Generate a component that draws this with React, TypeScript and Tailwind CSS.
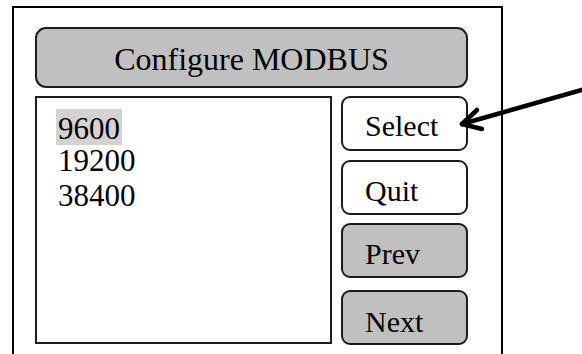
import React from "react";

const rates = ["9600", "19200", "38400"];

function SideButton({ label, filled, className }: { label: string; filled?: boolean; className?: string }) {
  return (
    <div
      className={`h-[55px] flex items-center pl-[22px] rounded-[9px] border-2 border-[#1c1c1c] text-[30px] text-black ${
        filled ? "bg-[#c0c0c0]" : "bg-white"
      } ${className || ""}`}
    >
      {label}
    </div>
  );
}

export default function App() {
  return (
    <div className="relative w-[582px] h-[354px] overflow-hidden bg-white font-['Liberation_Serif',serif]">
      {/* device frame, runs off the bottom */}
      <div className="ml-[12px] mt-[6px] w-[491px] h-[360px] border-2 border-b-0 border-black pl-[21px] pr-[33px] pt-[19px]">
        {/* title bar */}
        <div className="h-[61px] flex items-center justify-center pt-[2px] rounded-[11px] border-2 border-[#1c1c1c] bg-[#c0c0c0] text-[32px] text-black">
          Configure MODBUS
        </div>

        <div className="flex gap-[9px] mt-[8px]">
          {/* baud rate list */}
          <div className="w-[297px] h-[248px] border-2 border-[#1c1c1c] pl-[19px] pt-[8px] text-[31px] text-black">
            <div className="h-[36px]">
              <span className="inline-block h-[36px] pt-[3px] px-[2px] leading-[34px] bg-[#d3d3d3]">{rates[0]}</span>
            </div>
            <div className="pl-[2px] h-[34px] leading-[34px] mt-[2px]">{rates[1]}</div>
            <div className="pl-[2px] h-[34px] leading-[34px] mt-[1px]">{rates[2]}</div>
          </div>

          {/* buttons */}
          <div className="w-[127px] flex flex-col">
            <SideButton label="Select" className="pt-[3px]" />
            <SideButton label="Quit" className="mt-[9px] h-[54px] pt-[5px]" />
            <SideButton label="Prev" filled className="mt-[8px] pt-[6px]" />
            <SideButton label="Next" filled className="mt-[12px] pt-[7px]" />
          </div>
        </div>
      </div>

      {/* callout arrow */}
      <svg className="absolute left-0 top-0 pointer-events-none" width="582" height="354" viewBox="0 0 582 354">
        <g stroke="#000" strokeWidth="4.5" strokeLinecap="round" fill="none">
          <line x1="585" y1="89" x2="462" y2="124" />
          <line x1="462" y1="124" x2="477" y2="110" />
          <line x1="462" y1="124" x2="482" y2="129" />
        </g>
      </svg>
    </div>
  );
}
